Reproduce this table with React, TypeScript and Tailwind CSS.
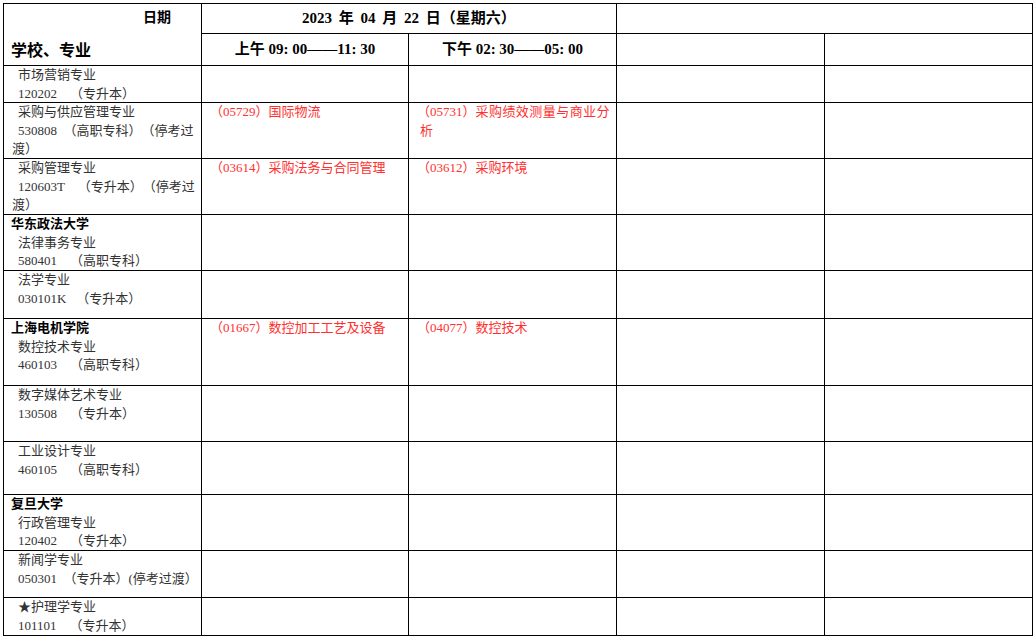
import React from "react";

type Line = { t: string; i?: boolean; b?: boolean };
type Row = { left: Line[]; am?: React.ReactNode; pm?: React.ReactNode };

const NB = "\u00a0\u00a0";
const IS = "\u3000";

const rows: Row[] = [
  { left: [{ t: "市场营销专业", i: true }, { t: "120202" + IS + "（专升本）", i: true }] },
  {
    left: [
      { t: "采购与供应管理专业", i: true },
      { t: "530808" + NB + "（高职专科）（停考过", i: true },
      { t: "渡）" },
    ],
    am: <div className="pl-[8px]">（05729）国际物流</div>,
    pm: (
      <>
        <div className="pl-[8px] whitespace-nowrap">
          （05731）<span className="tracking-[0.45px]">采购绩效测量与商业分</span>
        </div>
        <div className="pl-[11px]">析</div>
      </>
    ),
  },
  {
    left: [
      { t: "采购管理专业", i: true },
      { t: "120603T" + IS + "（专升本）（停考过", i: true },
      { t: "渡）" },
    ],
    am: <div className="pl-[8px]">（03614）采购法务与合同管理</div>,
    pm: <div className="pl-[8px]">（03612）采购环境</div>,
  },
  {
    left: [
      { t: "华东政法大学", b: true },
      { t: "法律事务专业", i: true },
      { t: "580401" + IS + "（高职专科）", i: true },
    ],
  },
  { left: [{ t: "法学专业", i: true }, { t: "030101K" + NB + "\u00a0（专升本）", i: true }] },
  {
    left: [
      { t: "上海电机学院", b: true },
      { t: "数控技术专业", i: true },
      { t: "460103" + IS + "（高职专科）", i: true },
    ],
    am: <div className="pl-[8px]">（01667）数控加工工艺及设备</div>,
    pm: <div className="pl-[8px]">（04077）数控技术</div>,
  },
  { left: [{ t: "数字媒体艺术专业", i: true }, { t: "130508" + IS + "（专升本）", i: true }] },
  { left: [{ t: "工业设计专业", i: true }, { t: "460105" + IS + "（高职专科）", i: true }] },
  {
    left: [
      { t: "复旦大学", b: true },
      { t: "行政管理专业", i: true },
      { t: "120402" + IS + "（专升本）", i: true },
    ],
  },
  { left: [{ t: "新闻学专业", i: true }, { t: "050301" + NB + "（专升本）(停考过渡）", i: true }] },
  { left: [{ t: "★护理学专业", i: true }, { t: "101101" + IS + "（专升本）", i: true }] },
];

function LeftCell({ lines }: { lines: Line[] }) {
  return (
    <div className="bg-white overflow-hidden pl-[7px] text-[13px] leading-[18.6px] text-[#333333]">
      {lines.map((l, k) => (
        <div
          key={k}
          className={
            l.b
              ? "whitespace-nowrap font-bold text-black"
              : l.i
              ? "whitespace-nowrap pl-[7px]"
              : "whitespace-nowrap pl-[1px]"
          }
        >
          {l.t}
        </div>
      ))}
    </div>
  );
}

function RedCell({ children }: { children?: React.ReactNode }) {
  return (
    <div className="bg-white overflow-hidden text-[13px] leading-[18.6px] text-[#ff3030] whitespace-nowrap">
      {children}
    </div>
  );
}

export default function App() {
  return (
    <div
      lang="zh-CN"
      className="min-h-screen w-full bg-white pt-[3px] pl-[3px] font-['Liberation_Serif','Noto_Sans_CJK_SC',serif] [text-spacing-trim:space-all]"
    >
      <div className="grid w-fit grid-cols-[197px_206px_207px_207px_207px] grid-rows-[29px_31px_36px_55px_55px_55px_47px_66px_55px_52px_55px_46px_37px] gap-px bg-black p-px">
        <div className="row-span-2 flex flex-col justify-between bg-white py-[4px] font-bold leading-[20px] text-black">
          <div className="pr-[30px] text-right text-[14px]">日期</div>
          <div className="pl-[7px] text-[16px]">学校、专业</div>
        </div>
        <div className="col-span-2 flex items-center justify-center bg-white text-[15px] font-bold text-black [word-spacing:3px]">
          2023 年 04 月 22 日（星期六）
        </div>
        <div className="col-span-2 bg-white" />
        <div className="flex items-center justify-center bg-white text-[15px] font-bold text-black">
          上午 09: 00——11: 30
        </div>
        <div className="flex items-center justify-center bg-white text-[15px] font-bold text-black">
          下午 02: 30——05: 00
        </div>
        <div className="bg-white" />
        <div className="bg-white" />
        {rows.map((r, k) => (
          <React.Fragment key={k}>
            <LeftCell lines={r.left} />
            <RedCell>{r.am}</RedCell>
            <RedCell>{r.pm}</RedCell>
            <div className="bg-white" />
            <div className="bg-white" />
          </React.Fragment>
        ))}
      </div>
    </div>
  );
}
